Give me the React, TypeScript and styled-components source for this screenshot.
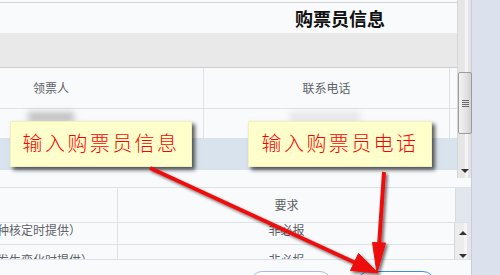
import React from "react";
import styled, { createGlobalStyle } from "styled-components";

const Global = createGlobalStyle`
  html, body { margin: 0; padding: 0; background: #dbe1ed; }
  body { font-family: "Noto Sans CJK SC", "Noto Sans", sans-serif; }
`;

const Screen = styled.div`
  position: relative;
  width: 500px;
  height: 275px;
  overflow: hidden;
  display: flex;
  background: #dbe1ed;
`;

const Window = styled.div`
  width: 471px;
  height: 275px;
  background: #f9fafb;
  border-right: 1px solid #c9ced6;
  display: flex;
  flex-direction: column;
`;

const TopPanel = styled.div`
  height: 178px;
  display: flex;
  flex-shrink: 0;
`;

const TopContent = styled.div`
  width: 457px;
  padding-top: 2px;
  display: flex;
  flex-direction: column;
  position: relative;
`;

const TitleRow = styled.div`
  height: 30px;
  border-top: 1px solid #d4d4d4;
  display: flex;
  align-items: center;
  justify-content: center;
  padding-left: 223px;
  font-size: 18px;
  font-weight: 700;
  color: #111;
`;

const Band = styled.div`
  height: 34px;
  background: #e9e9e9;
  border-bottom: 1px solid #cfcfcf;
`;

const Row = styled.div<{ $h: number; $bg?: string; $line?: boolean }>`
  height: ${(p) => p.$h}px;
  display: grid;
  grid-template-columns: 204px 246px 7px;
  background: ${(p) => p.$bg ?? "transparent"};
  border-bottom: ${(p) => (p.$line ? "1px solid #dde2e8" : "none")};
`;

const Cell = styled.div<{ $pad?: number; $center?: boolean; $divider?: boolean }>`
  display: flex;
  align-items: center;
  justify-content: ${(p) => (p.$center ? "center" : "flex-start")};
  padding-left: ${(p) => p.$pad ?? 0}px;
  border-right: ${(p) => (p.$divider ? "1px solid #dde2e8" : "none")};
  font-size: 12px;
  line-height: 14px;
  color: #5f6368;
  overflow: hidden;
  white-space: nowrap;
`;

const Blur = styled.div<{ $x: number; $w: number; $o: number }>`
  position: absolute;
  left: ${(p) => p.$x}px;
  top: 112px;
  width: ${(p) => p.$w}px;
  height: 10px;
  background: rgba(90, 90, 90, ${(p) => p.$o});
  filter: blur(3px);
`;

const VScroll = styled.div`
  width: 14px;
  border-left: 1px solid #d6d6d6;
  background: linear-gradient(90deg, #e6e6e6 0 57%, #f4f4f4 57% 78%, #e3e3e3 78%);
  position: relative;
  display: flex;
  flex-direction: column;
`;

const Thumb = styled.div`
  position: absolute;
  left: 0;
  top: 72px;
  width: 12px;
  height: 60px;
  border: 1px solid #9c9c9c;
  border-radius: 2px;
  background: linear-gradient(90deg, #f3f3f3, #e2e2e2 60%, #d2d2d2);
  display: flex;
  flex-direction: column;
  align-items: center;
  justify-content: center;
  gap: 1px;
`;

const Grip = styled.span`
  display: block;
  width: 7px;
  height: 1px;
  background: #6b6b6b;
`;

const Arrow = styled.span<{ $up?: boolean; $x: number; $y: number }>`
  position: absolute;
  left: ${(p) => p.$x}px;
  top: ${(p) => p.$y}px;
  width: 0;
  height: 0;
  border-left: 4px solid transparent;
  border-right: 4px solid transparent;
  ${(p) => (p.$up ? "border-bottom: 4px solid #333;" : "border-top: 4px solid #333;")}
`;

const LowerPanel = styled.div`
  padding-top: 9px;
  display: flex;
  flex-direction: column;
`;

const LowerHeader = styled.div`
  height: 34px;
  border-top: 1px solid #dde2e8;
  border-bottom: 1px solid #dde2e8;
  display: grid;
  grid-template-columns: 118px 337px 16px;
`;

const Corner = styled.div`
  background: #e3e7ed;
  border-left: 1px solid #d6dbe2;
`;

const LowerBody = styled.div`
  height: 36px;
  border-bottom: 1px solid #dde2e8;
  display: flex;
`;

const BodyRows = styled.div`
  width: 455px;
  overflow: hidden;
`;

const BodyInner = styled.div`
  margin-top: -8px;
`;

const BodyRow = styled.div`
  height: 29px;
  border-bottom: 1px solid #dde2e8;
  display: grid;
  grid-template-columns: 118px 337px;
`;

const LeftText = styled.div`
  display: flex;
  align-items: center;
  border-right: 1px solid #dde2e8;
  font-size: 12px;
  line-height: 14px;
  color: #5f6368;
  white-space: nowrap;
  overflow: hidden;
  text-indent: -3px;
`;

const SmallScroll = styled.div`
  width: 16px;
  position: relative;
  background: linear-gradient(90deg, #ececec 0 55%, #f5f5f5 55% 78%, #e6e6e6 78%);
  border-left: 1px solid #d6d6d6;
`;

const ButtonBar = styled.div`
  display: flex;
  padding-top: 11px;
  padding-left: 250px;
  gap: 25px;
`;

const Btn = styled.div<{ $primary?: boolean; $w: number }>`
  width: ${(p) => p.$w}px;
  height: 30px;
  border: 1px solid ${(p) => (p.$primary ? "#3a8ee6" : "#a8bdd4")};
  border-radius: 12px;
  background: #fff;
  box-sizing: border-box;
`;

const Callout = styled.div<{ $x: number; $w: number }>`
  position: absolute;
  left: ${(p) => p.$x}px;
  top: 121px;
  width: ${(p) => p.$w}px;
  height: 46px;
  box-sizing: border-box;
  background: #ffffcc;
  border: 1px solid #f0f0c0;
  box-shadow: 3px 3px 4px rgba(0, 0, 0, 0.65);
  display: flex;
  align-items: center;
  justify-content: center;
  padding-bottom: 3px;
  font-family: "Noto Sans CJK SC", sans-serif;
  font-size: 20px;
  font-weight: 300;
  letter-spacing: 2.4px;
  color: #ff0000;
`;

const Overlay = styled.svg`
  position: absolute;
  left: 0;
  top: 0;
  pointer-events: none;
`;

export default function App() {
  return (
    <Screen>
      <Global />
      <Window>
        <TopPanel>
          <TopContent>
            <TitleRow>购票员信息</TitleRow>
            <Band />
            <Row $h={40} $line>
              <Cell $pad={33} $divider>领票人</Cell>
              <Cell $center $divider>联系电话</Cell>
              <Cell />
            </Row>
            <Row $h={29}>
              <Cell $divider />
              <Cell $divider />
              <Cell />
            </Row>
            <Row $h={32} $bg="#d9e3ee">
              <Cell $divider />
              <Cell $divider />
              <Cell />
            </Row>
            <Blur $x={28} $w={46} $o={0.35} />
            <Blur $x={290} $w={70} $o={0.12} />
          </TopContent>
          <VScroll>
            <Thumb>
              <Grip />
              <Grip />
              <Grip />
              <Grip />
            </Thumb>
            <Arrow $x={3} $y={169} />
          </VScroll>
        </TopPanel>
        <LowerPanel>
          <LowerHeader>
            <Cell $divider />
            <Cell $center>要求</Cell>
            <Corner />
          </LowerHeader>
          <LowerBody>
            <BodyRows>
              <BodyInner>
                <BodyRow>
                  <LeftText>种核定时提供）</LeftText>
                  <Cell $center>非必报</Cell>
                </BodyRow>
                <BodyRow>
                  <LeftText>发生变化时提供）</LeftText>
                  <Cell $center>非必报</Cell>
                </BodyRow>
              </BodyInner>
            </BodyRows>
            <SmallScroll>
              <Arrow $up $x={4} $y={8} />
              <Arrow $x={4} $y={31} />
            </SmallScroll>
          </LowerBody>
          <ButtonBar>
            <Btn $w={82} />
            <Btn $w={78} $primary />
          </ButtonBar>
        </LowerPanel>
      </Window>

      <Callout $x={10} $w={182}>输入购票员信息</Callout>
      <Callout $x={248} $w={184}>输入购票员电话</Callout>

      <Overlay width={500} height={275} viewBox="0 0 500 275">
        <defs>
          <filter id="sh" x="-20%" y="-20%" width="140%" height="140%">
            <feDropShadow dx="2" dy="2" stdDeviation="1.5" floodColor="#000" floodOpacity="0.55" />
          </filter>
        </defs>
        <g filter="url(#sh)" fill="#ee1111" stroke="#ee1111">
          <line x1={150} y1={168} x2={358} y2={264} strokeWidth={4} />
          <polygon points="378,273 358.5,253.5 350.5,270.5" strokeWidth={1} />
          <line x1={384} y1={172} x2={379} y2={246} strokeWidth={4} />
          <polygon points="377,273 385.5,243 372.5,242.5" strokeWidth={1} />
        </g>
      </Overlay>
    </Screen>
  );
}
